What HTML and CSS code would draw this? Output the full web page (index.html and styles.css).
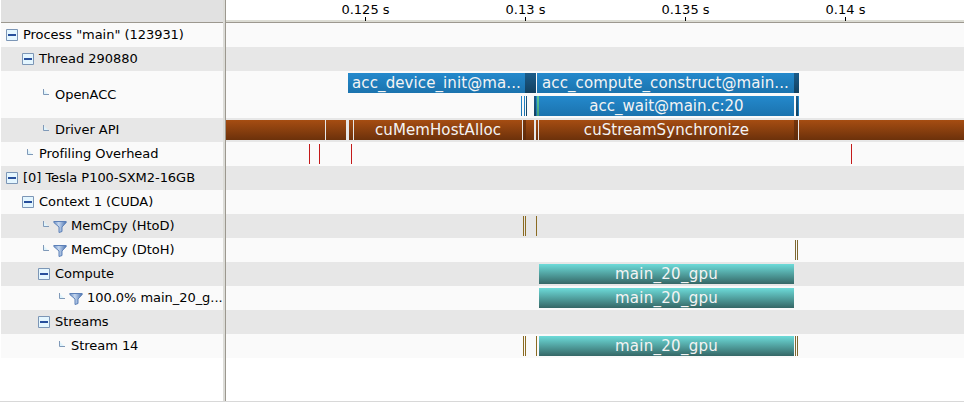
FILE: index.html
```html
<!DOCTYPE html>
<html lang="en">
<head>
<meta charset="utf-8">
<title>Timeline</title>
<link rel="stylesheet" href="styles.css">
</head>
<body>
<svg width="0" height="0" class="defs">
  <defs>
    <linearGradient id="steel"><stop offset="0" stop-color="#6f92c4"/><stop offset=".4" stop-color="#c4d6ee"/><stop offset="1" stop-color="#4a72b0"/></linearGradient>
    <symbol id="box" viewBox="0 0 12 12"><path fill="#e4f6ff" stroke="#7c96b6" d="M.5.5h11v11H.5z"/><path fill="#274f9c" d="M2 5h8v2H2z"/></symbol>
    <symbol id="leaf" viewBox="0 0 6 6"><path fill="#dff3fc" d="M1 1l4 4H1z"/><path fill="none" stroke="#7f99b8" d="M.5 0v5.5H6"/></symbol>
    <symbol id="filter" viewBox="0 0 14 12"><path fill="url(#steel)" stroke="#5c80b8" d="M.8.5h12.4v1L9 6v4.5l-3 1V6L.8 1.5z"/></symbol>
  </defs>
</svg>
<main class="app">
  <aside class="tree">
    <div class="corner"></div>
    <div class="row d0"><svg class="box"><use href="#box"/></svg>Process "main" (123931)</div>
    <div class="row d1"><svg class="box"><use href="#box"/></svg>Thread 290880</div>
    <div class="row tall d2"><svg class="leaf"><use href="#leaf"/></svg>OpenACC</div>
    <div class="row d2"><svg class="leaf"><use href="#leaf"/></svg>Driver API</div>
    <div class="row d1"><svg class="leaf"><use href="#leaf"/></svg>Profiling Overhead</div>
    <div class="row d0"><svg class="box"><use href="#box"/></svg>[0] Tesla P100-SXM2-16GB</div>
    <div class="row d1"><svg class="box"><use href="#box"/></svg>Context 1 (CUDA)</div>
    <div class="row d2"><svg class="leaf"><use href="#leaf"/></svg><svg class="filter"><use href="#filter"/></svg>MemCpy (HtoD)</div>
    <div class="row d2"><svg class="leaf"><use href="#leaf"/></svg><svg class="filter"><use href="#filter"/></svg>MemCpy (DtoH)</div>
    <div class="row d2"><svg class="box"><use href="#box"/></svg>Compute</div>
    <div class="row d3"><svg class="leaf"><use href="#leaf"/></svg><svg class="filter"><use href="#filter"/></svg>100.0% main_20_g...</div>
    <div class="row d2"><svg class="box"><use href="#box"/></svg>Streams</div>
    <div class="row d3"><svg class="leaf"><use href="#leaf"/></svg>Stream 14</div>
  </aside>
  <div class="sash"></div>
  <section class="chart">
    <div class="ruler"><span>0.125 s</span><span>0.13 s</span><span>0.135 s</span><span>0.14 s</span></div>
    <div class="row"></div>
    <div class="row"></div>
    <div class="row tall">
      <div class="lane">
        <i class="blue" style="--x:122;--w:177">acc_device_init@ma...</i><i class="navy" style="--x:299;--w:11"></i><i class="blue" style="--x:311;--w:257">acc_compute_construct@main...</i><i class="navy" style="--x:568;--w:5"></i>
      </div>
      <div class="lane">
        <i class="blue" style="--x:295;--w:1"></i><i class="blue" style="--x:298;--w:1"></i><i class="navy" style="--x:300;--w:1"></i><i class="navy" style="--x:308;--w:2"></i><i class="blue" style="--x:310;--w:1"></i><i class="green" style="--x:311;--w:2"></i><i class="blue snug" style="--x:313;--w:255">acc_wait@main.c:20</i><i class="navy" style="--x:570;--w:2"></i><i class="blue" style="--x:572;--w:1"></i>
      </div>
    </div>
    <div class="row"><div class="lane">
      <i class="brown" style="--x:0;--w:99"></i><i class="brown" style="--x:100;--w:20"></i><i class="brown" style="--x:123;--w:4"></i><i class="brown" style="--x:128;--w:168">cuMemHostAlloc</i><i class="umber" style="--x:297;--w:3"></i><i class="brown" style="--x:300;--w:8"></i><i class="brown" style="--x:310;--w:2"></i><i class="brown" style="--x:313;--w:255">cuStreamSynchronize</i><i class="umber" style="--x:568;--w:4"></i><i class="brown" style="--x:573;--w:165"></i>
    </div></div>
    <div class="row"><div class="lane">
      <i class="red" style="--x:83;--w:1"></i><i class="red" style="--x:93;--w:1"></i><i class="red" style="--x:125;--w:1"></i><i class="red" style="--x:625;--w:1"></i>
    </div></div>
    <div class="row"></div>
    <div class="row"></div>
    <div class="row"><div class="lane">
      <i class="gold" style="--x:297;--w:1"></i><i class="gold" style="--x:299;--w:1"></i><i class="gold" style="--x:310;--w:1"></i>
    </div></div>
    <div class="row"><div class="lane">
      <i class="olive" style="--x:569;--w:1"></i><i class="olive" style="--x:571;--w:1"></i>
    </div></div>
    <div class="row"><div class="lane"><i class="teal" style="--x:313;--w:255">main_20_gpu</i></div></div>
    <div class="row"><div class="lane"><i class="teal" style="--x:313;--w:255">main_20_gpu</i></div></div>
    <div class="row"></div>
    <div class="row"><div class="lane">
      <i class="gold" style="--x:297;--w:1"></i><i class="gold" style="--x:299;--w:1"></i><i class="gold" style="--x:310;--w:1"></i><i class="teal" style="--x:313;--w:255">main_20_gpu</i><i class="olive" style="--x:569;--w:1"></i><i class="olive" style="--x:571;--w:1"></i>
    </div></div>
  </section>
</main>
</body>
</html>
```
FILE: styles.css
```css
* { box-sizing: border-box; }
body { margin: 0; background: #fff; font: 13px/24px "DejaVu Sans", sans-serif; color: #000; overflow: hidden; }
.defs { display: block; height: 0; }
.app { display: grid; grid-template-columns: 222px 3px 738px; height: 402px; padding-left: 1px; border-bottom: 1px solid #d8d8d8; }
.corner { height: 23px; background: #e1e1e1; border-bottom: 1px solid #9c988f; }
.row { height: 24px; background: #fafafa; }
.row:nth-child(odd) { background: #e7e7e7; }
.row.tall { height: 47px; background: #fafafa; }

.tree .row { display: flex; align-items: center; white-space: nowrap; letter-spacing: -.04px; padding-left: calc(5px + var(--depth) * 16px); }
.d0 { --depth: 0; }
.d1 { --depth: 1; }
.d2 { --depth: 2; }
.d3 { --depth: 3; }
.tree svg { flex: none; }
.box { width: 12px; height: 12px; margin-right: 5px; }
.leaf { width: 6px; height: 6px; margin: -4px 6px 0 5px; }
.tall .leaf { margin-top: -5px; }
.leaf + .filter { margin-left: -2px; }
.filter { width: 14px; height: 12px; margin: 2px 4px 0 0; }

.sash { background: #dcdcd8; border-right: 1px solid #9c988f; }
.ruler { height: 23px; display: grid; grid-template-columns: repeat(4, 160px); padding-left: 59.5px; background: #fff; border-bottom: 1px solid #9c988f; box-shadow: inset 0 -2px #dcdcd4; }
.ruler span { display: grid; justify-items: center; height: 21px; line-height: 19px; grid-template-rows: 17px 4px; }
.ruler span::after { content: ""; width: 1px; background: #000; }
.chart .row { padding-top: 2px; }
.lane { display: grid; grid-template-columns: 738px; height: 20px; margin-bottom: 3px; }
.lane i { grid-area: 1 / 1; margin-left: calc(var(--x) * 1px); width: calc(var(--w) * 1px); height: 20px; font: 15px/20px "DejaVu Sans", sans-serif; letter-spacing: .1px; color: #f4f4f4; text-align: center; white-space: nowrap; overflow: hidden; }
.lane .snug { letter-spacing: 0; }
.lane .teal { letter-spacing: .28px; }
.blue { background: linear-gradient(#2489cc, #1b73ae); }
.navy { background: linear-gradient(#1b5c8a, #13415f); }
.green { background: linear-gradient(#5cc99b, #459c78); }
.brown { background: linear-gradient(#a64d12, #6c310b); }
.umber { background: linear-gradient(#75360d, #5f2b0a); }
.red { background: #c41a1a; }
.gold { background: #8b6b22; }
.olive { background: #7e6830; }
.teal { background: linear-gradient(#6ddbd9, #356766); }
```
